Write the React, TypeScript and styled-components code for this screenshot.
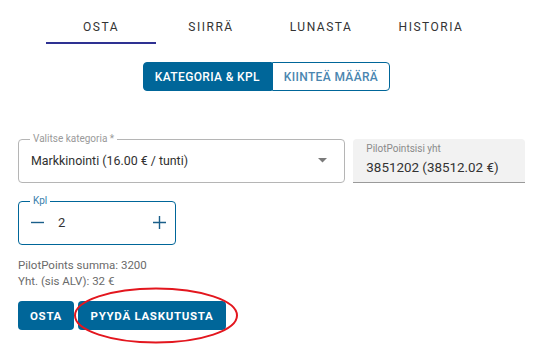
import React from "react";
import styled, { createGlobalStyle } from "styled-components";

const Global = createGlobalStyle`
  html, body { margin: 0; padding: 0; background: #fff; }
  body { font-family: Roboto, "Liberation Sans", sans-serif; color: rgba(0,0,0,0.87); }
  * { box-sizing: border-box; }
`;

const Page = styled.div`
  width: 533px;
  height: 352px;
  padding: 0 8px 0 18px;
  position: relative;
  overflow: hidden;
`;

const Tabs = styled.div`
  display: flex;
  width: 440px;
  margin: 0 auto 0 28px;
`;

const Tab = styled.div<{ $active?: boolean }>`
  width: 110px;
  height: 44px;
  display: flex;
  align-items: center;
  justify-content: center;
  padding-top: 12px;
  font-size: 12px;
  letter-spacing: 1.5px;
  color: #333;
  border-bottom: 2px solid ${(p) => (p.$active ? "#2e3192" : "transparent")};
`;

const ToggleRow = styled.div`
  display: flex;
  justify-content: center;
  margin-top: 18px;
  padding-right: 10px;
`;

const ToggleBtn = styled.button<{ $on?: boolean; $side: "l" | "r" }>`
  height: 29px;
  padding: 0 11px;
  font-family: inherit;
  font-size: 12px;
  font-weight: 500;
  letter-spacing: 0.35px;
  border: 1px solid #006699;
  background: ${(p) => (p.$on ? "#006699" : "#fff")};
  color: ${(p) => (p.$on ? "#fff" : "#4a86b0")};
  border-radius: ${(p) => (p.$side === "l" ? "4px 0 0 4px" : "0 4px 4px 0")};
`;

const FieldRow = styled.div`
  display: flex;
  gap: 8px;
  margin-top: 42px;
  align-items: flex-end;
`;

const Outlined = styled.fieldset<{ $w: number; $focus?: boolean }>`
  width: ${(p) => p.$w}px;
  margin: 0;
  padding: 0 ${(p) => (p.$focus ? 9 : 12)}px 7px 12px;
  border: ${(p) => (p.$focus ? "1.5px solid #006699" : "1px solid #b5b5b5")};
  border-radius: 4px;
  min-width: 0;
`;

const Legend = styled.legend<{ $focus?: boolean }>`
  font-size: 10px;
  line-height: 12px;
  padding: 0 3px;
  margin-left: -1px;
  color: ${(p) => (p.$focus ? "#3a80ad" : "#9a9a9a")};
`;

const InnerRow = styled.div`
  height: 30px;
  display: flex;
  align-items: center;
`;

const SelectValue = styled.span`
  flex: 1;
  font-size: 12.4px;
  color: #303030;
`;

const Filled = styled.div`
  width: 172px;
  height: 44px;
  background: #f2f2f2;
  border-radius: 4px 4px 0 0;
  border-bottom: 1px solid #9a9a9a;
  padding: 4px 12px 0 13px;
  display: flex;
  flex-direction: column;
`;

const FilledLabel = styled.span`
  font-size: 10px;
  line-height: 12px;
  color: #8a8a8a;
`;

const FilledValue = styled.span`
  font-size: 13.4px;
  line-height: 20px;
  margin-top: 3px;
  color: #333;
`;

const KplWrap = styled.div`
  margin-top: 12px;
`;

const Qty = styled.span`
  flex: 1;
  font-size: 13px;
  color: #333;
  padding-left: 14px;
`;

const Summary = styled.div`
  margin-top: 12px;
  font-size: 11.5px;
  line-height: 16px;
  color: #6a6a6a;
`;

const Actions = styled.div`
  display: flex;
  gap: 4px;
  margin-top: 12px;
`;

const Btn = styled.button<{ $w: number }>`
  width: ${(p) => p.$w}px;
  height: 29px;
  border: none;
  border-radius: 4px;
  background: #006699;
  color: #fff;
  font-family: inherit;
  font-size: 11.5px;
  font-weight: 700;
  letter-spacing: 0.7px;
  padding: 0;
`;

const Ellipse = styled.svg`
  position: absolute;
  left: 72px;
  top: 286px;
  pointer-events: none;
`;

export default function App() {
  return (
    <>
      <Global />
      <Page>
        <Tabs>
          <Tab $active>OSTA</Tab>
          <Tab>SIIRRÄ</Tab>
          <Tab>LUNASTA</Tab>
          <Tab>HISTORIA</Tab>
        </Tabs>
        <ToggleRow>
          <ToggleBtn $on $side="l">KATEGORIA &amp; KPL</ToggleBtn>
          <ToggleBtn $side="r">KIINTEÄ MÄÄRÄ</ToggleBtn>
        </ToggleRow>
        <FieldRow>
          <Outlined $w={328}>
            <Legend>Valitse kategoria *</Legend>
            <InnerRow>
              <SelectValue>Markkinointi (16.00 € / tunti)</SelectValue>
              <svg width="9" height="5" viewBox="0 0 9 5" style={{ marginRight: 5 }}>
                <path d="M0 0 L9 0 L4.5 4.5 Z" fill="#7a7a7a" />
              </svg>
            </InnerRow>
          </Outlined>
          <Filled>
            <FilledLabel>PilotPointsisi yht</FilledLabel>
            <FilledValue>3851202 (38512.02 €)</FilledValue>
          </Filled>
        </FieldRow>
        <KplWrap>
          <Outlined $w={158} $focus>
            <Legend $focus>Kpl</Legend>
            <InnerRow>
              <svg width="13" height="13" viewBox="0 0 13 13">
                <path d="M0 6.5 H13" stroke="#1a5f8a" strokeWidth="1.4" />
              </svg>
              <Qty>2</Qty>
              <svg width="13" height="13" viewBox="0 0 13 13">
                <path d="M0 6.5 H13 M6.5 0 V13" stroke="#1a5f8a" strokeWidth="1.4" />
              </svg>
            </InnerRow>
          </Outlined>
        </KplWrap>
        <Summary>
          <div>PilotPoints summa: 3200</div>
          <div>Yht. (sis ALV): 32 €</div>
        </Summary>
        <Actions>
          <Btn $w={56}>OSTA</Btn>
          <Btn $w={148}>PYYDÄ LASKUTUSTA</Btn>
        </Actions>
        <Ellipse width="170" height="60" viewBox="0 0 170 60">
          <ellipse cx="84" cy="29.5" rx="81" ry="27" fill="none" stroke="#e3161e" strokeWidth="2" />
        </Ellipse>
      </Page>
    </>
  );
}
